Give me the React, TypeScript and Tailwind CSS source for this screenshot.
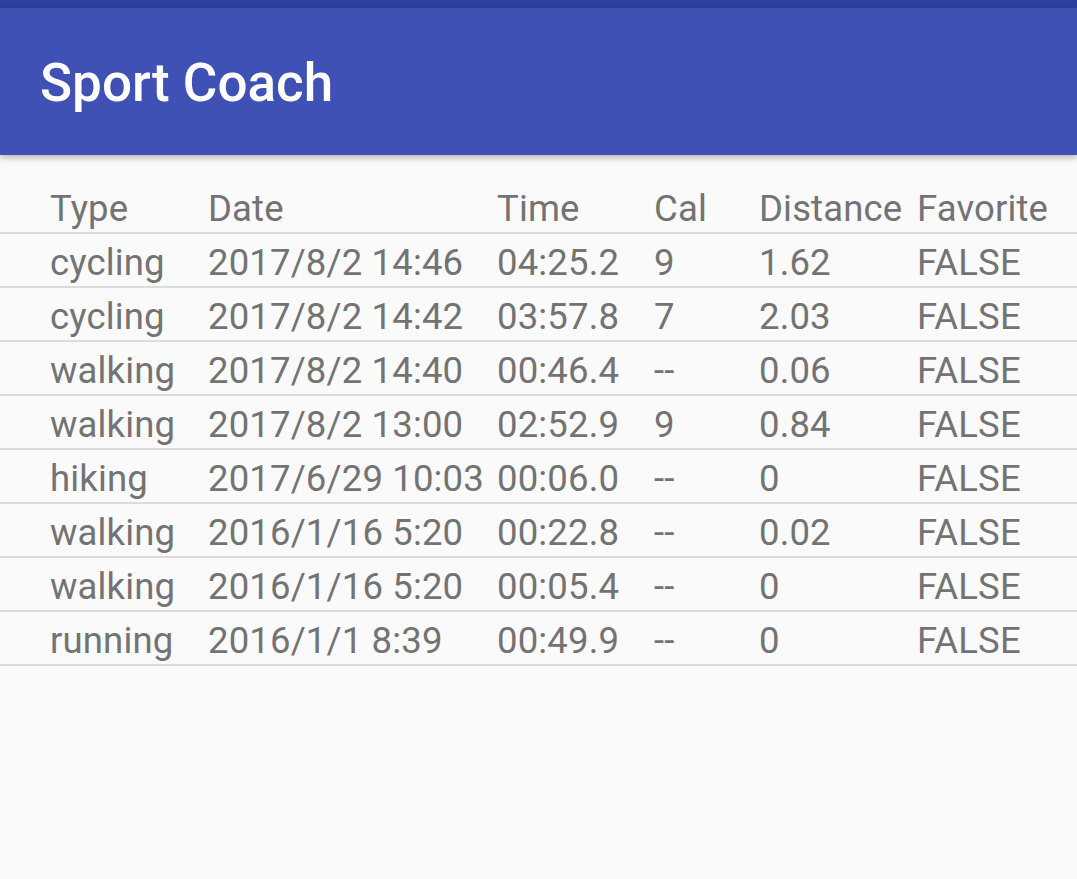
import React from "react";

const rows = [
  ["cycling", "2017/8/2 14:46", "04:25.2", "9", "1.62", "FALSE"],
  ["cycling", "2017/8/2 14:42", "03:57.8", "7", "2.03", "FALSE"],
  ["walking", "2017/8/2 14:40", "00:46.4", "--", "0.06", "FALSE"],
  ["walking", "2017/8/2 13:00", "02:52.9", "9", "0.84", "FALSE"],
  ["hiking", "2017/6/29 10:03", "00:06.0", "--", "0", "FALSE"],
  ["walking", "2016/1/16 5:20", "00:22.8", "--", "0.02", "FALSE"],
  ["walking", "2016/1/16 5:20", "00:05.4", "--", "0", "FALSE"],
  ["running", "2016/1/1 8:39", "00:49.9", "--", "0", "FALSE"],
];

const header = ["Type", "Date", "Time", "Cal", "Distance", "Favorite"];

function Row({ cells }: { cells: string[] }) {
  return (
    <div className="flex h-[54px] border-b-2 border-[#dcdcdc] pl-[50px] pt-[8px] text-[36.5px] leading-[42px] tracking-[0.15px] text-[#737373] whitespace-nowrap">
      <div className="w-[158px]">{cells[0]}</div>
      <div className="w-[289px]">{cells[1]}</div>
      <div className="w-[157px]">{cells[2]}</div>
      <div className="w-[105px]">{cells[3]}</div>
      <div className="w-[158px]">{cells[4]}</div>
      <div>{cells[5]}</div>
    </div>
  );
}

export default function App() {
  return (
    <div
      className="w-[1077px] h-[879px] bg-[#fafafa] overflow-hidden"
      style={{ fontFamily: "Roboto, 'Liberation Sans', sans-serif" }}
    >
      <div className="h-[8px] bg-[#303f9f]" />
      <div className="relative z-10 h-[147px] bg-[#3f51b5] shadow-[0_3px_6px_rgba(0,0,0,0.25)] flex items-center pl-[40px] pt-[4px]">
        <span className="text-white text-[53px] font-medium leading-none">Sport Coach</span>
      </div>
      <div className="pt-[25px]">
        <Row cells={header} />
        {rows.map((r, i) => (
          <Row key={i} cells={r} />
        ))}
      </div>
    </div>
  );
}
